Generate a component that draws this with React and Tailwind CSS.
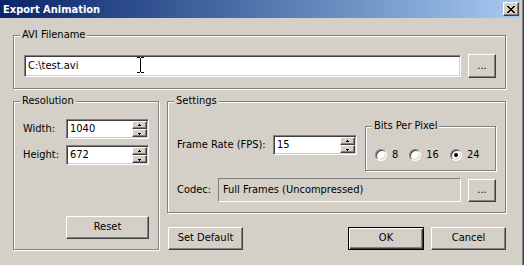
const raised =
  "border border-t-white border-l-white border-r-[#404040] border-b-[#404040] shadow-[inset_-1px_-1px_0_#808080] bg-[#d4d0c8]";
const sunken =
  "border border-t-[#808080] border-l-[#808080] border-r-white border-b-white shadow-[inset_1px_1px_0_#404040,inset_-1px_-1px_0_#d4d0c8]";

const Button = ({ className = "", isDefault, children }) => (
  <div
    className={`flex items-center justify-center ${
      isDefault
        ? "border border-black bg-[#d4d0c8] shadow-[inset_1px_1px_0_#fff,inset_-1px_-1px_0_#404040,inset_-2px_-2px_0_#808080]"
        : raised
    } ${className}`}
  >
    {children}
  </div>
);

const Group = ({ label, className = "", children }) => (
  <div
    className={`relative border border-[#808080] shadow-[inset_1px_1px_0_#fff,1px_1px_0_#fff] ${className}`}
  >
    <span className="absolute left-[6px] top-[-8px] px-[2px] bg-[#d4d0c8] leading-[13px]">
      {label}
    </span>
    {children}
  </div>
);

const Arrow = ({ up }) => (
  <svg width="5" height="3" viewBox="0 0 5 3" shapeRendering="crispEdges">
    <path
      d={up ? "M2 0h1v1h-1z M1 1h3v1h-3z" : "M1 1h3v1h-3z M2 2h1v1h-1z"}
      fill="#000"
    />
  </svg>
);

const Spinner = ({ value, className = "" }) => (
  <div className={`flex bg-white ${sunken} ${className}`}>
    <div className="flex-1 flex items-center pl-[3px]">{value}</div>
    <div className="flex flex-col w-[15px] my-[1px] mr-[1px]">
      <div className={`flex-1 flex items-center justify-center ${raised}`}>
        <Arrow up />
      </div>
      <div className={`flex-1 flex items-center justify-center ${raised}`}>
        <Arrow />
      </div>
    </div>
  </div>
);

const Radio = ({ label, checked }) => (
  <div className="flex items-center gap-[5px]">
    <div className="w-[12px] h-[12px] rounded-full bg-white border border-t-[#808080] border-l-[#808080] border-r-white border-b-white shadow-[inset_1px_1px_0_#404040,inset_-1px_-1px_0_#d4d0c8] flex items-center justify-center">
      {checked && <div className="w-[4px] h-[4px] rounded-full bg-black" />}
    </div>
    <span>{label}</span>
  </div>
);

const CloseGlyph = () => (
  <svg width="8" height="7" viewBox="0 0 8 7" shapeRendering="crispEdges">
    <path
      d="M0 0h2v1h-2z M6 0h2v1h-2z M1 1h2v1h-2z M5 1h2v1h-2z M2 2h4v1h-4z M3 3h2v1h-2z M2 4h4v1h-4z M1 5h2v1h-2z M5 5h2v1h-2z M0 6h2v1h-2z M6 6h2v1h-2z"
      fill="#000"
    />
  </svg>
);

const IBeam = () => (
  <svg
    className="absolute left-[112px] top-[1px]"
    width="7"
    height="16"
    viewBox="0 0 7 16"
    shapeRendering="crispEdges"
  >
    <path d="M0 0h3v1h1v-1h3v1h-3v14h3v1h-3v-1h-1v1h-3v-1h3v-14h-3z" fill="#000" />
  </svg>
);

export default function App() {
  return (
    <div className="w-[524px] h-[265px] flex bg-[#d4d0c8] overflow-hidden text-[11px] text-black font-['DejaVu_Sans_Condensed','Liberation_Sans',sans-serif]">
      <div className="w-[520px] h-full">
        {/* title bar */}
        <div className="h-[18px] flex items-center justify-between pl-[3px] pr-[1px] bg-linear-to-r from-[#0a246a] to-[#a6caf0]">
          <span className="text-white font-bold leading-none">Export Animation</span>
          <div className={`w-[16px] h-[14px] flex items-center justify-center ${raised}`}>
            <CloseGlyph />
          </div>
        </div>

        <div className="pl-[13px] pt-[17px]">
          <Group label="AVI Filename" className="w-[493px] h-[54px] pl-[10px] pt-[18px]">
            <div className="flex items-start gap-[7px]">
              <div className={`relative mt-[1px] w-[437px] h-[22px] bg-white flex items-center pl-[3px] ${sunken}`}>
                C:\test.avi
                <IBeam />
              </div>
              <Button className="w-[28px] h-[24px]">...</Button>
            </div>
          </Group>

          <div className="flex gap-[8px] mt-[12px]">
            <Group label="Resolution" className="w-[146px] h-[149px] pl-[9px] pt-[17px]">
              <div className="flex flex-col gap-[6px]">
                <div className="flex items-center">
                  <span className="w-[43px]">Width:</span>
                  <Spinner value="1040" className="w-[83px] h-[20px]" />
                </div>
                <div className="flex items-center">
                  <span className="w-[43px]">Height:</span>
                  <Spinner value="672" className="w-[83px] h-[20px]" />
                </div>
              </div>
              <Button className="ml-[43px] mt-[51px] w-[83px] h-[23px]">Reset</Button>
            </Group>

            <div className="flex flex-col w-[339px]">
              <Group label="Settings" className="h-[112px] pl-[9px]">
                <div className="flex items-start">
                  <div className="flex items-center mt-[33px]">
                    <span className="w-[96px]">Frame Rate (FPS):</span>
                    <Spinner value="15" className="w-[84px] h-[20px]" />
                  </div>
                  <Group label="Bits Per Pixel" className="ml-[8px] mt-[24px] w-[131px] h-[45px] pl-[9px] pt-[20px]">
                    <div className="flex items-center gap-[11px]">
                      <Radio label="8" />
                      <Radio label="16" />
                      <Radio label="24" checked />
                    </div>
                  </Group>
                </div>
                <div className="flex items-center mt-[7px]">
                  <span className="w-[41px]">Codec:</span>
                  <div className="w-[243px] h-[24px] flex items-center pl-[4px] border border-t-[#808080] border-l-[#808080] border-r-white border-b-white">
                    Full Frames (Uncompressed)
                  </div>
                  <Button className="ml-[7px] w-[28px] h-[23px]">...</Button>
                </div>
              </Group>

              <div className="flex items-center mt-[14px]">
                <Button className="ml-[1px] w-[75px] h-[23px]">Set Default</Button>
                <div className="ml-auto flex gap-[7px]">
                  <Button isDefault className="w-[76px] h-[23px]">OK</Button>
                  <Button className="w-[75px] h-[23px]">Cancel</Button>
                </div>
              </div>
            </div>
          </div>
        </div>
      </div>
      {/* right window frame */}
      <div className="w-[4px] h-full bg-[#d4d0c8] border-r border-r-[#404040] shadow-[inset_-1px_0_0_#808080]" />
    </div>
  );
}
